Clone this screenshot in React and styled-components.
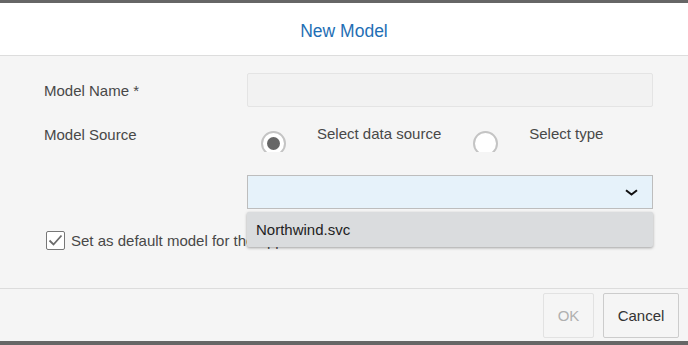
import styled, { createGlobalStyle } from "styled-components";

const GlobalStyle = createGlobalStyle`
  html, body {
    margin: 0;
    padding: 0;
    background: #f5f5f5;
  }
  body {
    font-family: "Liberation Sans", Arial, sans-serif;
  }
`;

const Dialog = styled.div`
  width: 688px;
  height: 345px;
  display: flex;
  flex-direction: column;
  background: #f5f5f5;
  overflow: hidden;
`;

const EdgeStrip = styled.div`
  height: ${(p) => p.h}px;
  flex: none;
  background: #666666;
`;

const Header = styled.div`
  height: 52px;
  flex: none;
  background: #ffffff;
  border-bottom: 1px solid #dddddd;
  display: flex;
  align-items: center;
  justify-content: center;
  .title {
    color: #1f6fb5;
    font-size: 17.5px;
    margin-top: 4px;
  }
`;

const Body = styled.div`
  flex: 1;
  position: relative;
  padding: 17px 0 0 44px;
  display: grid;
  grid-template-columns: 203px 406px;
  grid-auto-rows: min-content;
  align-content: start;
`;

const Label = styled.div`
  font-size: 15px;
  color: #484848;
  height: ${(p) => p.h || 34}px;
  line-height: ${(p) => p.lh || 36}px;
  margin-top: ${(p) => p.mt || 0}px;
`;

const TextInput = styled.div`
  height: 32px;
  background: #f2f2f2;
  border: 1px solid #e4e4e4;
  border-radius: 2px;
`;

const RadioRow = styled.div`
  display: flex;
  height: 30px;
  margin-top: 16px;
  padding-left: 14px;
`;

const RadioOption = styled.div`
  display: flex;
  margin-left: ${(p) => p.offset || 0}px;
  .text {
    font-size: 15px;
    color: #484848;
    line-height: 22px;
    margin-left: 31px;
  }
`;

const RadioClip = styled.div`
  width: 25px;
  height: 21px;
  margin-top: 8px;
  overflow: hidden;
`;

const RadioCircle = styled.div`
  width: 21px;
  height: 21px;
  border: 2px solid #c4c4c4;
  border-radius: 50%;
  background: #ffffff;
  display: flex;
  align-items: center;
  justify-content: center;
  &::after {
    content: "";
    width: 13px;
    height: 13px;
    border-radius: 50%;
    background: ${(p) => (p.checked ? "#666666" : "transparent")};
  }
`;

const SelectBox = styled.div`
  margin-top: 22px;
  height: 32px;
  background: #e6f2fa;
  border: 1px solid #bdbdbd;
  display: flex;
  align-items: center;
  justify-content: flex-end;
  padding-right: 14px;
`;

const DropList = styled.div`
  position: absolute;
  left: 247px;
  top: 156px;
  width: 406px;
  height: 35px;
  background: #dadcde;
  border-radius: 2px;
  box-shadow: 0 1px 3px rgba(0, 0, 0, 0.35);
  display: flex;
  align-items: center;
  padding-left: 9px;
  box-sizing: border-box;
  font-size: 15px;
  color: #222222;
  z-index: 2;
`;

const CheckRow = styled.label`
  grid-column: 1 / span 2;
  display: flex;
  align-items: center;
  margin: 22px 0 0 2px;
  font-size: 15px;
  color: #484848;
  .text {
    margin-left: 6px;
  }
`;

const CheckBox = styled.div`
  width: 17px;
  height: 17px;
  border: 1px solid #777777;
  border-radius: 2px;
  background: #ffffff;
  display: flex;
  align-items: center;
  justify-content: center;
`;

const Footer = styled.div`
  height: 48px;
  flex: none;
  border-top: 1px solid #dcdcdc;
  display: flex;
  justify-content: flex-end;
  align-items: flex-start;
  gap: 9px;
  padding: 4px 9px 0 0;
`;

const Button = styled.button`
  height: 45px;
  min-width: ${(p) => p.w}px;
  padding: 0;
  font-family: "Liberation Sans", Arial, sans-serif;
  font-size: 15px;
  background: #f5f5f5;
  border-radius: 2px;
  border: 1px solid ${(p) => (p.disabled ? "#e2e2e2" : "#cccccc")};
  color: ${(p) => (p.disabled ? "#b0b0b0" : "#333333")};
`;

export default function App() {
  return (
    <>
      <GlobalStyle />
      <Dialog>
        <EdgeStrip h={3} />
        <Header>
          <span className="title">New Model</span>
        </Header>
        <Body>
          <Label>Model Name *</Label>
          <TextInput />

          <Label h={30} lh={24} mt={16}>
            Model Source
          </Label>
          <RadioRow>
            <RadioOption>
              <RadioClip>
                <RadioCircle checked />
              </RadioClip>
              <span className="text">Select data source</span>
            </RadioOption>
            <RadioOption offset={32}>
              <RadioClip>
                <RadioCircle />
              </RadioClip>
              <span className="text">Select type</span>
            </RadioOption>
          </RadioRow>

          <div />
          <SelectBox>
            <svg width="13" height="7" viewBox="0 0 13 7">
              <path
                d="M1 1.2 L6.5 5.5 L12 1.2"
                fill="none"
                stroke="#111"
                strokeWidth="2"
              />
            </svg>
          </SelectBox>

          <CheckRow>
            <CheckBox>
              <svg width="15" height="13" viewBox="0 0 15 13">
                <path
                  d="M1.5 6.5 L5.5 10.5 L13.5 1.5"
                  fill="none"
                  stroke="#6c6c6c"
                  strokeWidth="1.8"
                />
              </svg>
            </CheckBox>
            <span className="text">Set as default model for the application</span>
          </CheckRow>

          <DropList>Northwind.svc</DropList>
        </Body>
        <Footer>
          <Button w={51} disabled>
            OK
          </Button>
          <Button w={76}>Cancel</Button>
        </Footer>
        <EdgeStrip h={4} />
      </Dialog>
    </>
  );
}
